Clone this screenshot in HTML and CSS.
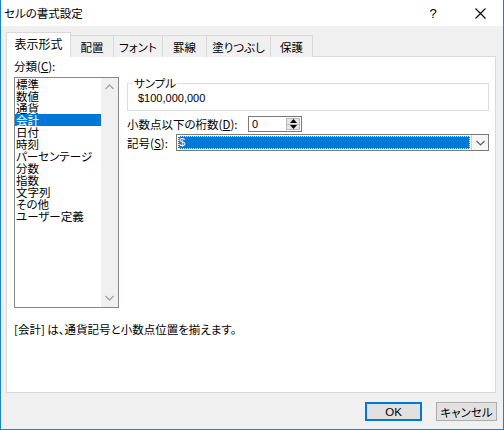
FILE: index.html
```html
<!DOCTYPE html>
<html lang="ja">
<head>
<meta charset="utf-8">
<title>セルの書式設定</title>
<link rel="stylesheet" href="styles.css">
</head>
<body>
<div class="window">
  <div class="titlebar">
    <div class="title">セルの書式設定</div>
    <div class="tbtn help">?</div>
    <div class="tbtn close">
      <svg width="11" height="11" viewBox="0 0 11 11"><path d="M0.5 0.5 L10.5 10.5 M10.5 0.5 L0.5 10.5" stroke="#000" stroke-width="1.1" fill="none"/></svg>
    </div>
  </div>
  <div class="tabs">
    <div class="tab active t1">表示形式</div>
    <div class="tab t2">配置</div>
    <div class="tab t3">フォント</div>
    <div class="tab t4">罫線</div>
    <div class="tab t5">塗りつぶし</div>
    <div class="tab t6">保護</div>
  </div>
  <div class="panel">
    <div class="columns">
      <div class="leftcol">
        <div class="lbl">分類(<u>C</u>):</div>
        <div class="listbox">
          <div class="items">
            <div class="item">標準</div>
            <div class="item">数値</div>
            <div class="item">通貨</div>
            <div class="item sel">会計</div>
            <div class="item">日付</div>
            <div class="item">時刻</div>
            <div class="item">パーセンテージ</div>
            <div class="item">分数</div>
            <div class="item">指数</div>
            <div class="item">文字列</div>
            <div class="item">その他</div>
            <div class="item">ユーザー定義</div>
          </div>
          <div class="vscroll">
            <svg width="9" height="6" viewBox="0 0 9 6"><path d="M0.5 5 L4.5 1 L8.5 5" stroke="#a6a6a6" stroke-width="1.4" fill="none"/></svg>
            <svg width="9" height="6" viewBox="0 0 9 6"><path d="M0.5 1 L4.5 5 L8.5 1" stroke="#a6a6a6" stroke-width="1.4" fill="none"/></svg>
          </div>
        </div>
      </div>
      <div class="rightcol">
        <fieldset class="sample">
          <legend>サンプル</legend>
          <div class="sample-val">$100,000,000</div>
        </fieldset>
        <div class="row spinrow">
          <div class="rlabel">小数点以下の桁数(<u>D</u>):</div>
          <div class="spin">
            <div class="spin-val">0</div>
            <div class="spin-btns">
              <div class="sb up"><svg width="7" height="4" viewBox="0 0 7 4"><path d="M0 4 L3.5 0 L7 4 Z" fill="#000"/></svg></div>
              <div class="sb down"><svg width="7" height="4" viewBox="0 0 7 4"><path d="M0 0 L3.5 4 L7 0 Z" fill="#000"/></svg></div>
            </div>
          </div>
        </div>
        <div class="row comborow">
          <div class="rlabel">記号(<u>S</u>):</div>
          <div class="combo">
            <div class="combo-val"><span class="focus">$</span></div>
            <div class="combo-btn"><svg width="9" height="6" viewBox="0 0 9 6"><path d="M0.5 1 L4.5 5 L8.5 1" stroke="#606060" stroke-width="1.2" fill="none"/></svg></div>
          </div>
        </div>
      </div>
    </div>
    <div class="desc">[会計] は、通貨記号と小数点位置を揃えます。</div>
  </div>
  <div class="buttons">
    <div class="btn ok">OK</div>
    <div class="btn cancel">キャンセル</div>
  </div>
</div>
</body>
</html>
```

FILE: styles.css
```css
* { box-sizing: border-box; }
html, body { margin: 0; padding: 0; background: #ffffff; }
body {
  font-family: "Noto Sans CJK JP", "Noto Sans", sans-serif;
  font-size: 11.5px;
  color: #000;
  font-feature-settings: "palt";
}
u { text-decoration: underline; text-underline-offset: 1px; }
.latin { font-family: "Liberation Sans", "Noto Sans CJK JP", sans-serif; }

.window {
  width: 504px;
  height: 430px;
  background: #f0f0f0;
  border-left: 1px solid #1883d7;
  border-right: 1px solid #1883d7;
  border-bottom: 1px solid #1883d7;
  display: flex;
  flex-direction: column;
}

.titlebar {
  height: 26px;
  background: #ffffff;
  display: flex;
  align-items: center;
}
.title {
  flex: 1;
  padding-left: 3px;
  line-height: 14px;
}
.tbtn {
  width: 46px;
  height: 26px;
  display: flex;
  align-items: center;
  justify-content: center;
}
.help { font-family: "Liberation Sans", sans-serif; font-size: 13px; padding-right: 2px; }

.tabs {
  display: flex;
  align-items: flex-end;
  height: 25px;
  margin-top: 6px;
  margin-left: 5px;
  margin-bottom: -1px;
  position: relative;
  z-index: 1;
}
.tab {
  height: 22px;
  border-top: 1px solid #d9d9d9;
  border-right: 1px solid #d9d9d9;
  background: #f0f0f0;
  display: flex;
  align-items: center;
  justify-content: center;
  line-height: 14px;
  padding-top: 1px;
}
.tab.active {
  height: 25px;
  background: #ffffff;
  border-left: 1px solid #d9d9d9;
  padding-top: 0;
  padding-bottom: 2px;
}
.t1 { width: 65px; font-size: 12px; }
.t2 { width: 43px; }
.t3 { width: 49px; }
.t4 { width: 44px; }
.t5 { width: 64px; }
.t6 { width: 42px; }

.panel {
  margin-left: 5px;
  width: 490px;
  height: 337px;
  background: #ffffff;
  border: 1px solid #d9d9d9;
  padding: 2px 0 0 7px;
}
.columns {
  display: flex;
  gap: 8px;
}
.lbl {
  line-height: 14px;
  height: 14px;
  margin-bottom: 4px;
}
.listbox {
  width: 105px;
  height: 231px;
  border: 1px solid #828790;
  display: flex;
}
.items {
  width: 86px;
}
.item {
  height: 12px;
  line-height: 12px;
  padding-left: 1px;
  white-space: nowrap;
}
.item.sel {
  background: #0078d7;
  color: #ffffff;
}
.vscroll {
  width: 17px;
  background: #f0f0f0;
  display: flex;
  flex-direction: column;
  justify-content: space-between;
  align-items: center;
  padding: 6px 0 6px;
}

.rightcol {
  width: 362px;
  padding-top: 18px;
}
.sample {
  margin: 0;
  padding: 0;
  border: 1px solid #dcdcdc;
  height: 34px;
}
.sample legend {
  margin-left: 5px;
  padding: 0 1px;
  line-height: 12px;
}
.sample-val {
  padding: 2px 0 0 10px;
  line-height: 14px;
  font-family: "Liberation Sans", sans-serif;
  font-size: 11px;
}
.row {
  display: flex;
  align-items: center;
}
.spinrow {
  margin-top: 5px;
  height: 16px;
}
.rlabel {
  line-height: 14px;
  white-space: nowrap;
}
.spinrow .rlabel { width: 121px; }
.spin {
  width: 54px;
  height: 16px;
  border: 1px solid #7a7a7a;
  display: flex;
  background: #fff;
}
.spin-val {
  flex: 1;
  padding-left: 3px;
  line-height: 14px;
  font-family: "Liberation Sans", sans-serif;
  font-size: 11px;
}
.spin-btns {
  width: 15px;
  display: flex;
  flex-direction: column;
  padding: 1px 1px 1px 0;
}
.sb {
  flex: 1;
  background: #e6e6e6;
  border: 1px solid #b8b8b8;
  display: flex;
  align-items: center;
  justify-content: center;
}
.sb.down { border-top: none; }

.comborow {
  margin-top: 2px;
  height: 17px;
}
.comborow .rlabel { width: 49px; }
.combo {
  width: 313px;
  height: 17px;
  border: 1px solid #7a7a7a;
  display: flex;
  background: #fff;
}
.combo-val {
  flex: 1;
  padding: 1px;
  display: flex;
}
.focus {
  flex: 1;
  background: #0078d7;
  color: #fff;
  line-height: 13px;
  outline: 1px dotted #ffffff;
  outline-offset: -1px;
  padding-left: 1px;
  font-family: "Liberation Sans", sans-serif;
  font-size: 11px;
}
.combo-btn {
  width: 17px;
  border-left: 1px solid #d0d0d0;
  display: flex;
  align-items: center;
  justify-content: center;
  background: #f6f6f6;
}

.desc {
  margin-top: 14px;
  line-height: 14px;
}

.buttons {
  display: flex;
  justify-content: flex-end;
  gap: 14px;
  margin-top: 9px;
  padding-right: 6px;
}
.btn {
  height: 19px;
  background: #e1e1e1;
  border: 1px solid #adadad;
  display: flex;
  align-items: center;
  justify-content: center;
  line-height: 14px;
}
.ok { width: 57px; border: 2px solid #0078d7; font-family: "Liberation Sans", sans-serif; font-size: 11.5px; }
.cancel { width: 61px; }
```
